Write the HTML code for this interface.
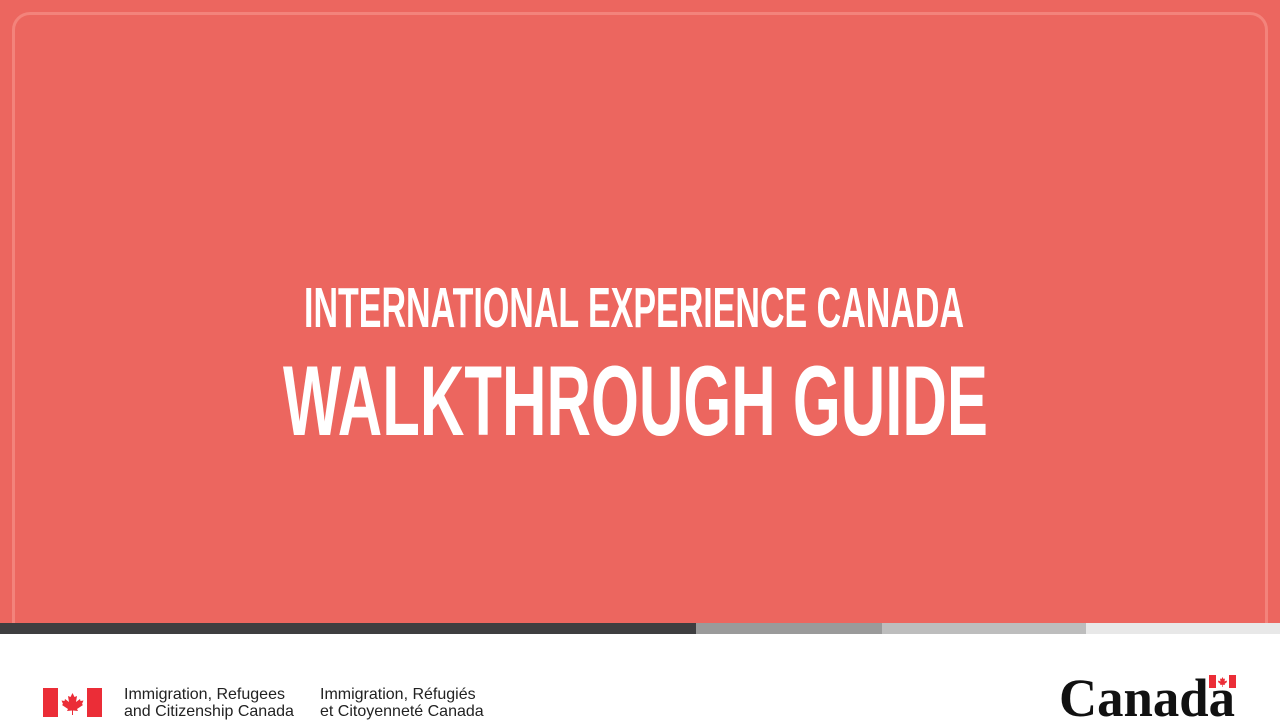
<!DOCTYPE html>
<html><head><meta charset="utf-8"><style>
body{margin:0;width:1280px;height:720px;overflow:hidden;background:#fff;font-family:"Liberation Sans",sans-serif;position:relative}
.red{position:absolute;left:0;top:0;width:1280px;height:623px;background:#ec665f;overflow:hidden}
.frame{position:absolute;left:12px;top:12px;width:1256px;height:640px;border:3px solid #f3837b;border-radius:18px;box-sizing:border-box}
.bar{position:absolute;top:623px;height:11px}
.txt{position:absolute;font-size:16px;line-height:17px;color:#222}
</style></head><body>
<div class="red"><div class="frame"></div></div>
<div class="bar" style="left:0;width:696px;background:#3e3e40"></div>
<div class="bar" style="left:696px;width:186px;background:#9a9a9a"></div>
<div class="bar" style="left:882px;width:204px;background:#bdbdbd"></div>
<div class="bar" style="left:1086px;width:194px;background:#e8e8e8"></div>
<svg style="position:absolute;left:0;top:0" width="1280" height="623">
<text x="304" y="327" textLength="660" lengthAdjust="spacingAndGlyphs" font-family="Liberation Sans" font-weight="bold" font-size="57" fill="#fff">INTERNATIONAL EXPERIENCE CANADA</text>
<text x="283" y="435" textLength="705" lengthAdjust="spacingAndGlyphs" font-family="Liberation Sans" font-weight="bold" font-size="99" fill="#fff">WALKTHROUGH GUIDE</text>
</svg>
<svg style="position:absolute;left:43px;top:688px" width="59" height="29" viewBox="0 0 59 29">
<rect x="0" y="0" width="15" height="29" fill="#eb2d37"/><rect x="44" y="0" width="15" height="29" fill="#eb2d37"/>
<path d="M29.5 5 L27.5 9 L25 8 L26 14 L22 11 L21.5 13 L18.5 12.5 L20 16 L19 17 L25 21 L24 23 L29 22.5 L29 27 L30 27 L30 22.5 L35 23 L34 21 L40 17 L39 16 L40.5 12.5 L37.5 13 L37 11 L33 14 L34 8 L31.5 9 Z" fill="#eb2d37"/>
</svg>
<div class="txt" style="left:124px;top:686px">Immigration, Refugees<br>and Citizenship Canada</div>
<div class="txt" style="left:320px;top:686px">Immigration, Réfugiés<br>et Citoyenneté Canada</div>
<svg style="position:absolute;left:1055px;top:665px" width="190" height="55">
<text x="4" y="51" textLength="176" lengthAdjust="spacingAndGlyphs" font-family="Liberation Serif" font-weight="bold" font-size="54" fill="#111">Canada</text>
</svg>
<svg style="position:absolute;left:1209px;top:675px" width="27" height="13" viewBox="0 0 27 13">
<rect width="7" height="13" fill="#eb2d37"/><rect x="20" width="7" height="13" fill="#eb2d37"/>
<path d="M13.5 2 L12.5 4 L11 3.5 L11.5 6.5 L9.5 5.5 L9 7 L11.5 9 L11 10 L13.2 9.8 L13.2 12 L13.8 12 L13.8 9.8 L16 10 L15.5 9 L18 7 L17.5 5.5 L15.5 6.5 L16 3.5 L14.5 4 Z" fill="#eb2d37"/>
</svg>
</body></html>
